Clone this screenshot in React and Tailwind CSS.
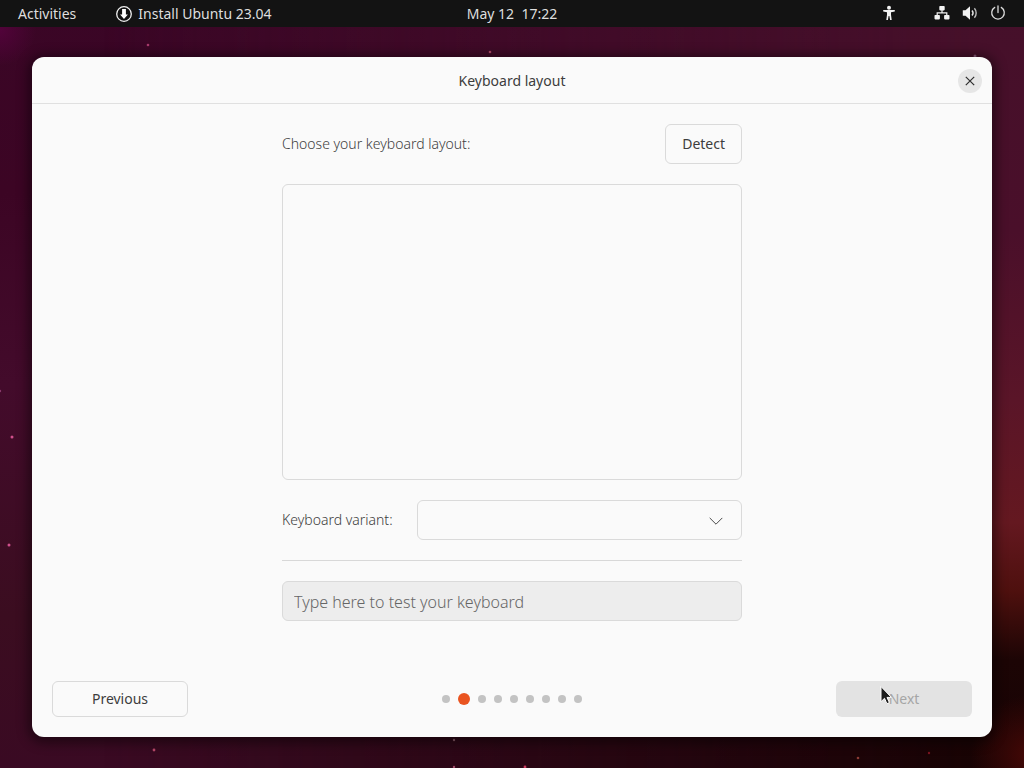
import React from "react";

const STARS = [
  { x: 148, y: 45, c: "#a83a6c", r: 1.3 },
  { x: 490, y: 52, c: "#b04a68", r: 1.3 },
  { x: 975, y: 56, c: "#8a5a78", r: 1.5 },
  { x: 12, y: 437, c: "#d0508c", r: 1.5 },
  { x: 9, y: 545, c: "#d0508c", r: 1.5 },
  { x: 0, y: 391, c: "#8a3a6c", r: 1.2 },
  { x: 154, y: 750, c: "#b8486a", r: 1.4 },
  { x: 454, y: 740, c: "#8a5a68", r: 1.2 },
  { x: 454, y: 767, c: "#a04a68", r: 1.2 },
  { x: 525, y: 767, c: "#c83a5c", r: 1.4 },
  { x: 858, y: 758, c: "#8a3a34", r: 1.3 },
  { x: 929, y: 753, c: "#7a1420", r: 1.2 },
];

function Wallpaper() {
  return (
    <svg
      aria-hidden="true"
      className="absolute inset-0 h-full w-full"
      viewBox="0 0 1024 768"
      preserveAspectRatio="none"
    >
      <defs>
        <linearGradient id="left" x1="0" y1="0" x2="0" y2="1">
          <stop offset="0" stopColor="#3a0626" />
          <stop offset="0.25" stopColor="#3c0524" />
          <stop offset="0.5" stopColor="#430b2b" />
          <stop offset="0.8" stopColor="#3b0d20" />
          <stop offset="1" stopColor="#3a0a23" />
        </linearGradient>
        <linearGradient id="right" x1="0" y1="0" x2="0" y2="1">
          <stop offset="0" stopColor="#45102a" />
          <stop offset="0.3" stopColor="#4a0f2a" />
          <stop offset="0.52" stopColor="#5a1528" />
          <stop offset="0.68" stopColor="#641820" />
          <stop offset="0.77" stopColor="#4e100e" />
          <stop offset="0.86" stopColor="#1c0505" />
          <stop offset="1" stopColor="#180304" />
        </linearGradient>
        <linearGradient id="across" x1="0" y1="0" x2="1" y2="0">
          <stop offset="0.1" stopColor="#fff" stopOpacity="0" />
          <stop offset="0.95" stopColor="#fff" />
        </linearGradient>
        <mask id="fade">
          <rect width="1024" height="768" fill="url(#across)" />
        </mask>
        <radialGradient id="corner">
          <stop offset="0" stopColor="#52033a" />
          <stop offset="1" stopColor="#52033a" stopOpacity="0" />
        </radialGradient>
        <radialGradient id="ember">
          <stop offset="0" stopColor="#440806" />
          <stop offset="1" stopColor="#440806" stopOpacity="0" />
        </radialGradient>
      </defs>
      <rect width="1024" height="768" fill="url(#left)" />
      <rect width="1024" height="768" fill="url(#right)" mask="url(#fade)" />
      <circle cx="0" cy="30" r="36" fill="url(#corner)" />
      <circle cx="1030" cy="755" r="60" fill="url(#ember)" />
      {STARS.map((s) => (
        <circle key={`${s.x}-${s.y}`} cx={s.x} cy={s.y} r={s.r} fill={s.c} />
      ))}
    </svg>
  );
}

function InstallerIcon() {
  return (
    <svg aria-hidden="true" viewBox="0 0 16 16" className="h-4 w-4">
      <circle cx="8" cy="8" r="7.3" fill="none" stroke="#f0f0f0" strokeWidth="1.3" />
      <path d="M6.100 3h3.800v5.500h2L8 13 4.100 8.500h2z" fill="#fff" />
    </svg>
  );
}

function AccessibilityIcon() {
  return (
    <svg aria-hidden="true" viewBox="0 0 16 16" className="h-4 w-4" fill="#f2f2f2">
      <circle cx="8" cy="2.700" r="2" />
      <path d="M2.200 5h11.600v1.500L10 7.300v2.500l.7 5.200H9.100L8.400 11h-.8l-.7 4H5.300L6 9.800V7.300l-3.800-.8z" />
    </svg>
  );
}

function NetworkIcon() {
  return (
    <svg aria-hidden="true" viewBox="0 0 16 16" className="h-4 w-4" fill="#f2f2f2">
      <rect x="5.300" y="1" width="5.400" height="4.400" rx="0.8" />
      <rect x="0.500" y="10" width="5.400" height="4.400" rx="0.8" />
      <rect x="10.100" y="10" width="5.400" height="4.400" rx="0.8" />
      <path d="M7.400 5h1.200v2.300h4.800v3h-1.200V8.500H3.800v1.800H2.600v-3h4.800z" />
    </svg>
  );
}

function VolumeIcon() {
  return (
    <svg aria-hidden="true" viewBox="0 0 16 16" className="h-4 w-4" fill="none">
      <path d="M0.800 5.200h2.700L8 1.200v13.600l-4.500-4H0.800z" fill="#f2f2f2" />
      <path d="M10 5.500a3.800 3.800 0 0 1 0 5" stroke="#e6e6e6" strokeWidth="1.4" />
      <path d="M12.400 3.200a7.400 7.400 0 0 1 0 9.600" stroke="#bdbdbd" strokeWidth="1.4" />
    </svg>
  );
}

function PowerIcon() {
  return (
    <svg aria-hidden="true" viewBox="0 0 16 16" className="h-4 w-4" fill="none" stroke="#dcdcdc" strokeWidth="1.3" strokeLinecap="round">
      <path d="M4.700 2.400a6.300 6.300 0 1 0 6.600 0" />
      <path d="M8 0.900v6.600" />
    </svg>
  );
}

function TopBar() {
  return (
    <header className="relative grid h-[27px] grid-cols-[1fr_auto_1fr] items-center bg-[#131313] text-sm text-[#dedede]">
      <div className="flex items-center gap-10 pl-[18px]">
        <button type="button">Activities</button>
        <button type="button" className="flex items-center gap-1.5">
          <InstallerIcon />
          Install Ubuntu 23.04
        </button>
      </div>
      <button type="button" className="whitespace-pre">May 12  17:22</button>
      <div className="flex items-center justify-end gap-[37px] pr-[18px] pb-0.5">
        <button type="button" aria-label="Accessibility">
          <AccessibilityIcon />
        </button>
        <button type="button" aria-label="System menu" className="flex items-center gap-3">
          <NetworkIcon />
          <VolumeIcon />
          <PowerIcon />
        </button>
      </div>
    </header>
  );
}

function StepDots({ count, current }) {
  return (
    <ol aria-label="Installation progress" className="flex items-center gap-2">
      {Array.from({ length: count }, (_, i) => (
        <li
          key={i}
          aria-current={i === current ? "step" : undefined}
          className={i === current ? "h-3 w-3 rounded-full bg-[#e95420]" : "h-2 w-2 rounded-full bg-[#c3c3c3]"}
        />
      ))}
    </ol>
  );
}

function Pointer() {
  return (
    <svg aria-hidden="true" viewBox="0 0 12 20" className="pointer-events-none absolute left-11 top-1 h-5 w-3">
      <path
        d="M1 1.500v15.200l3.500-3.400 2.400 5.400 2.500-1.100-2.400-5.200h4.400z"
        fill="#1e1e1e"
        stroke="#fff"
        strokeWidth="1"
        strokeLinejoin="round"
      />
    </svg>
  );
}

export default function App() {
  return (
    <div className="relative flex min-h-screen flex-col bg-[#3c0a24] font-['Noto_Sans','Open_Sans',sans-serif]">
      <Wallpaper />
      <TopBar />
      <main className="relative flex flex-1 flex-col px-8 pt-[30px] pb-[31px]">
        <section className="flex flex-1 flex-col rounded-xl bg-[#fafafa] text-sm text-[#3d3d3d] shadow-[0_2px_12px_4px_rgba(0,0,0,0.45)]">
          <div className="grid h-[47px] grid-cols-[1fr_auto_1fr] items-center border-b border-[#e0e0e0] px-2.5 pt-0.5">
            <h1 className="col-start-2">Keyboard layout</h1>
            <button
              type="button"
              aria-label="Close"
              className="flex h-6 w-6 items-center justify-center justify-self-end rounded-full bg-[#e6e6e6]"
            >
              <svg aria-hidden="true" viewBox="0 0 10 10" className="h-2.5 w-2.5" stroke="#2e2e2e" strokeWidth="1.2">
                <path d="M0.800 0.800l8.400 8.400M9.200 0.800L0.800 9.200" />
              </svg>
            </button>
          </div>

          <div className="mx-auto flex w-full max-w-[460px] flex-1 flex-col gap-5 pt-5">
            <div className="flex items-center justify-between">
              <p id="layout-label" className="font-light">Choose your keyboard layout:</p>
              <button type="button" className="h-10 rounded-md border border-[#dadada] px-4">
                Detect
              </button>
            </div>
            <ul
              role="listbox"
              aria-labelledby="layout-label"
              className="min-h-40 flex-1 rounded-md border border-[#dadada]"
            />
            <div className="grid grid-cols-[115px_1fr] items-center gap-5">
              <label htmlFor="variant" className="whitespace-nowrap font-light">Keyboard variant:</label>
              <div className="relative">
                <select
                  id="variant"
                  className="block h-10 w-full appearance-none rounded-md border border-[#dadada] bg-transparent pr-10 pl-3"
                />
                <svg
                  aria-hidden="true"
                  viewBox="0 0 14 8"
                  className="pointer-events-none absolute top-[17px] right-[19px] h-2 w-3.5"
                  fill="none"
                  stroke="#4a4a4a"
                >
                  <path d="M0.700 0.900L7 7.200l6.300-6.300" />
                </svg>
              </div>
            </div>
            <hr className="border-[#d8d8d8]" />
            <input
              type="text"
              aria-label="Type here to test your keyboard"
              placeholder="Type here to test your keyboard"
              className="h-10 rounded-md border border-[#dadada] bg-[#ededed] px-[11px] pt-0.5 text-base font-light placeholder:text-[#666666]"
            />
          </div>

          <footer className="grid grid-cols-[1fr_auto_1fr] items-center px-5 pt-[60px] pb-5">
            <button type="button" className="h-9 w-[136px] rounded-md border border-[#dadada]">
              Previous
            </button>
            <StepDots count={9} current={1} />
            <div className="relative w-[136px] justify-self-end">
              <button type="button" disabled className="h-9 w-full rounded-md bg-[#e3e3e3] text-[#a6a6a6]">
                Next
              </button>
              <Pointer />
            </div>
          </footer>
        </section>
      </main>
    </div>
  );
}
